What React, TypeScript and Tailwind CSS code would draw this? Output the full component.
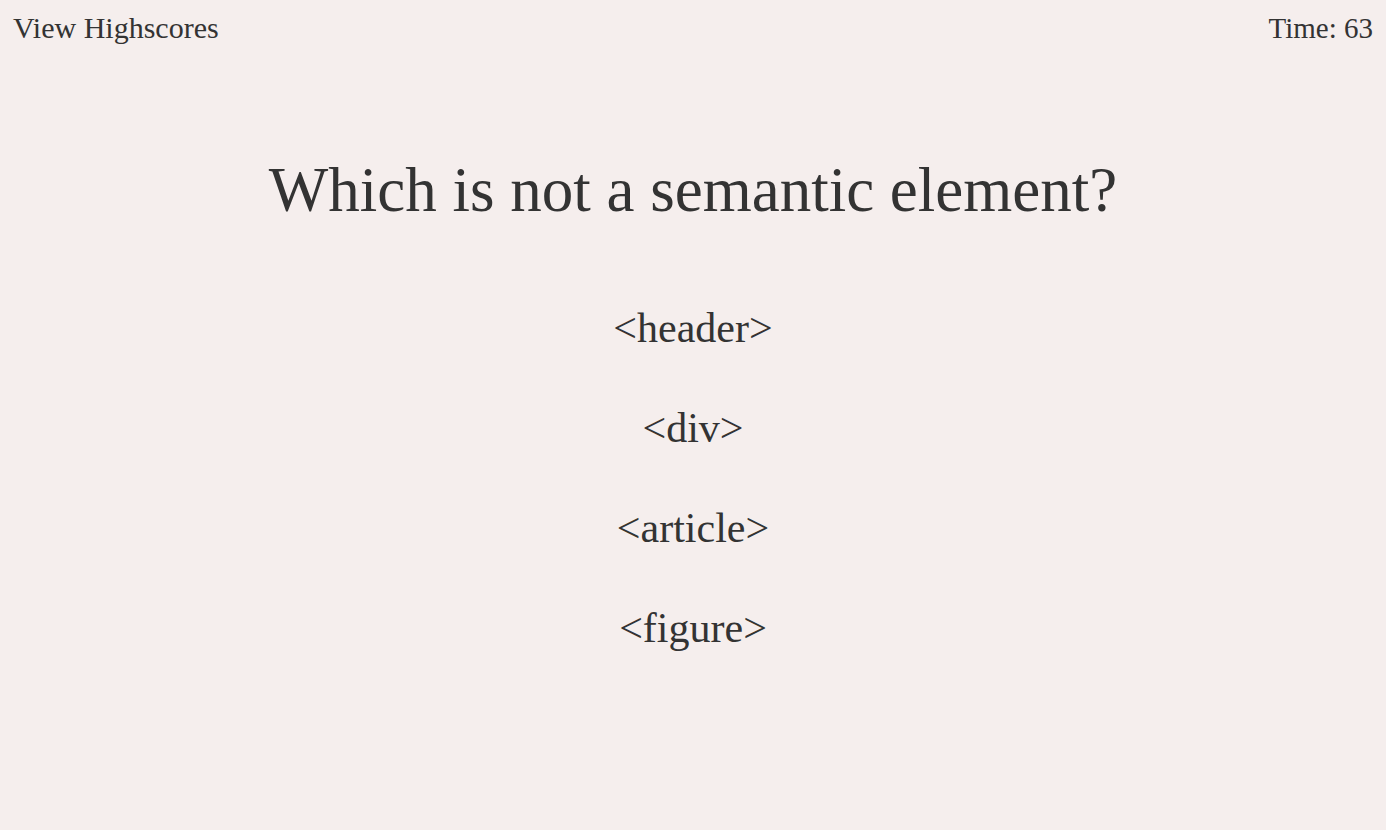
export default function App() {
  const options = ["<header>", "<div>", "<article>", "<figure>"];
  return (
    <div
      className="min-h-screen w-full bg-[#f5eeed] text-[#333333]"
      style={{ fontFamily: '"Liberation Serif", "Times New Roman", serif' }}
    >
      <header className="flex justify-between px-[13px] pt-[10px]">
        <a className="text-[30px] leading-[36px] cursor-pointer">View Highscores</a>
        <div className="text-[29px] leading-[36px]">Time: 63</div>
      </header>
      <main className="flex flex-col items-center">
        <h1 className="mt-[104px] text-[63px] leading-[80px] font-normal">
          Which is not a semantic element?
        </h1>
        <ul className="mt-[48px] flex flex-col items-center">
          {options.map((o) => (
            <li key={o} className="text-[42px] leading-[100px] cursor-pointer">
              {o}
            </li>
          ))}
        </ul>
      </main>
    </div>
  );
}
